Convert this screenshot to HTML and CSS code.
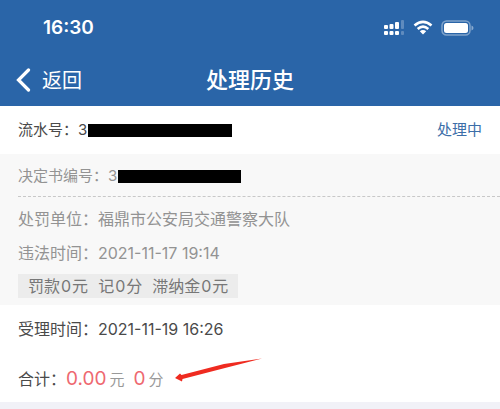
FILE: index.html
```html
<!DOCTYPE html>
<html lang="zh-CN">
<head>
<meta charset="utf-8">
<meta name="viewport" content="width=device-width, initial-scale=1">
<title>处理历史</title>
<link rel="stylesheet" href="styles.css">
</head>
<body>
<header class="header">
  <div class="status">
    <time class="clock">16:30</time>
    <div class="indicators">
      <svg width="22" height="16" viewBox="0 0 22 16" fill="#fff" aria-hidden="true">
        <rect x="1" y="5" width="4" height="4" rx="1"/>
        <rect x="6.500" y="4" width="4" height="5" rx="1"/>
        <rect x="12" y="2" width="4" height="7" rx="1"/>
        <rect x="18" y="0" width="3" height="9" rx="1" opacity=".25"/>
        <rect x="1" y="11" width="4" height="4" rx="1"/>
        <rect x="6.500" y="11" width="4" height="4" rx="1"/>
        <rect x="12" y="11" width="4" height="4" rx="1"/>
        <rect x="18" y="11" width="3" height="4" rx="1" opacity=".25"/>
      </svg>
      <svg width="20" height="16" viewBox="0 0 20 16" aria-hidden="true">
        <path d="M1.500 5.600Q10-1.800 18.500 5.600M4.700 9Q10 4.200 15.300 9" fill="none" stroke="#fff" stroke-width="2.600"/>
        <path d="M6.800 11.200Q10 8.600 13.200 11.200L10 14.600Z" fill="#fff"/>
      </svg>
      <svg width="33" height="16" viewBox="0 0 33 16" aria-hidden="true">
        <rect x="1" y="1" width="28" height="14" rx="4.500" fill="none" stroke="#fff" stroke-opacity=".4" stroke-width="1.500"/>
        <rect x="3" y="3" width="24" height="10" rx="2.500" fill="#fff"/>
        <path d="M30.500 5.500Q32.500 6.300 32.500 8T30.500 10.500Z" fill="#fff" opacity=".45"/>
      </svg>
    </div>
  </div>
  <nav class="navbar">
    <button class="back" type="button">
      <svg width="15" height="24" viewBox="0 0 15 24" aria-hidden="true"><path d="M12.500 2L2.500 12L12.500 22" fill="none" stroke="#fff" stroke-width="3.200" stroke-linecap="round"/></svg>
      返回
    </button>
    <h1 class="title">处理历史</h1>
  </nav>
</header>
<main class="record">
  <section class="serial">
    <div class="redacted"><span>流水号：</span><span>35</span><span class="mask mask-serial"></span></div>
    <a class="state" href="#">处理中</a>
  </section>
  <section class="decision">
    <div class="number redacted"><span>决定书编号：</span><span>35</span><span class="mask mask-number"></span></div>
    <p class="line">处罚单位：福鼎市公安局交通警察大队</p>
    <p class="line">违法时间：2021-11-17 19:14</p>
    <div class="penalty">
      <span class="item">罚款<b>0</b>元</span>
      <span class="item">记<b>0</b>分</span>
      <span class="item">滞纳金<b>0</b>元</span>
    </div>
  </section>
  <section class="summary">
    <p class="accepted">受理时间：2021-11-19 16:26</p>
    <p class="total">
      <span>合计：</span>
      <span class="amount"><strong>0.00</strong>元</span>
      <span class="amount"><strong>0</strong>分</span>
      <svg class="arrow" width="90" height="26" viewBox="0 0 90 26" aria-hidden="true"><path d="M1 21L6 16.500L7.500 18L50 7L88 1.500L51 11L8.500 22L8 24.500Z" fill="#ef2b20"/></svg>
    </p>
  </section>
</main>
</body>
</html>
```
FILE: styles.css
```css
* { box-sizing: border-box; }

body {
  margin: 0;
  background: #f1f1f7;
  color: #4a4a4a;
  font: 16px/24px Inter, "Noto Sans CJK SC", sans-serif;
}

p, h1 { margin: 0; }

.header {
  padding: 14px 16px 8px;
  background: #2a65a8;
  color: #fff;
}

.status {
  display: flex;
  align-items: center;
  justify-content: space-between;
  padding: 0 10px 0 27px;
}

.clock {
  font-size: 19px;
  line-height: 28px;
  font-weight: 600;
}

.indicators {
  display: flex;
  align-items: center;
  gap: 8px;
}

.navbar {
  display: grid;
  grid-template-columns: 1fr auto 1fr;
  align-items: center;
  margin-top: 20px;
}

.back {
  display: flex;
  align-items: center;
  gap: 11px;
  padding: 0;
  border: 0;
  background: none;
  color: inherit;
  font: 20px/36px "Noto Sans CJK SC", sans-serif;
}

.title {
  font-size: 22px;
  line-height: 36px;
  font-weight: 500;
}

.serial {
  display: flex;
  align-items: center;
  justify-content: space-between;
  padding: 12px 18px;
  background: #fff;
  font-size: 15px;
}

.state {
  color: #3c6ea8;
  text-decoration: none;
}

.redacted {
  display: flex;
  align-items: center;
}

.mask {
  height: 13px;
  margin-left: -8px;
  background: #000;
}

.mask-serial { width: 144px; }
.mask-number { width: 123px; }

.decision {
  padding: 8px 18px 7px;
  background: #f8f8f8;
  color: #939393;
}

.number {
  padding: 2px 0 8px;
  margin: 0 -18px 5px 0;
  border-bottom: 1px dashed #c8c8c8;
  font-size: 15px;
}

.line {
  padding: 5px 0;
}

.penalty {
  display: flex;
  gap: 10px;
  width: fit-content;
  padding: 0 10px;
  margin-top: 4px;
  background: #ececec;
  color: #777;
}

.item {
  display: flex;
  gap: 1px;
}

.item b { font-weight: 400; }

.summary {
  padding: 12px 18px 8px;
  background: #fff;
}

.total {
  position: relative;
  display: flex;
  align-items: baseline;
  margin-top: 24px;
  line-height: 28px;
}

.amount {
  display: flex;
  align-items: baseline;
  gap: 3px;
  margin-right: 9px;
  color: #999;
  font-size: 15px;
}

.amount strong {
  color: #ee6870;
  font-size: 19px;
  font-weight: 400;
}

.arrow {
  position: absolute;
  left: 156px;
  top: -8px;
}
```
